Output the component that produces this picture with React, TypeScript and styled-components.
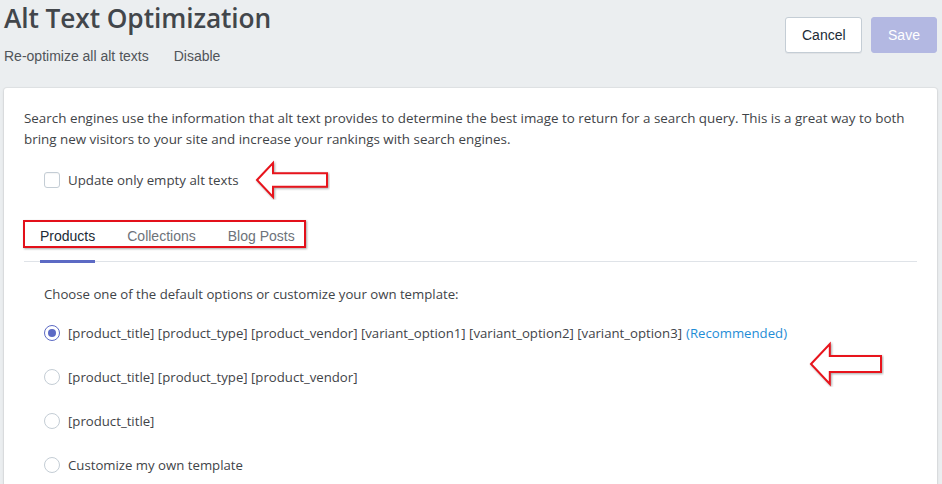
import React from "react";
import styled, { createGlobalStyle } from "styled-components";

const Global = createGlobalStyle`
  html, body { margin: 0; padding: 0; background: #ebeef0; }
  body { font-family: "Open Sans", "Liberation Sans", sans-serif; color: #3f4448; }
  * { box-sizing: border-box; }
`;

const Page = styled.div`
  width: 942px;
  height: 484px;
  overflow: hidden;
  padding: 0 5px 0 4px;
`;

const Header = styled.div`
  display: flex;
  justify-content: space-between;
  align-items: flex-start;
  height: 88px;
`;

const TitleBlock = styled.div`
  display: flex;
  flex-direction: column;
`;

const Title = styled.h1`
  margin: 0;
  font-family: "Open Sans", sans-serif;
  font-weight: 600;
  font-size: 26.3px;
  line-height: 36px;
  color: #42464b;
  letter-spacing: -0.1px;
`;

const SubLinks = styled.div`
  display: flex;
  gap: 25px;
  margin-top: 12px;
  font-family: "Liberation Sans", Arial, sans-serif;
  font-size: 14px;
  color: #505459;
`;

const Actions = styled.div`
  display: flex;
  gap: 9px;
  margin-top: 17px;
`;

const Button = styled.button<{ $primary?: boolean }>`
  height: 36px;
  padding: 0 16px;
  border-radius: 3px;
  font-family: "Liberation Sans", Arial, sans-serif;
  font-size: 14px;
  border: 1px solid ${(p) => (p.$primary ? "#b3b8e2" : "#c4cdd5")};
  background: ${(p) => (p.$primary ? "#b3b8e2" : "#ffffff")};
  color: ${(p) => (p.$primary ? "#ffffff" : "#212b36")};
  box-shadow: ${(p) => (p.$primary ? "none" : "0 1px 0 rgba(22,29,37,0.05)")};
  width: ${(p) => (p.$primary ? "66px" : "77px")};
`;

const Card = styled.div`
  position: relative;
  background: #ffffff;
  border-radius: 3px;
  box-shadow: 0 0 0 1px rgba(63, 63, 68, 0.05), 0 1px 3px 0 rgba(63, 63, 68, 0.15);
  padding: 20px 20px 0 20px;
  height: 420px;
`;

const Intro = styled.p`
  margin: 0;
  font-family: "Open Sans", sans-serif;
  font-size: 13.4px;
  line-height: 21px;
  color: #3f4448;
`;

const CheckRow = styled.label`
  display: flex;
  align-items: center;
  gap: 8px;
  margin: 21px 0 0 20px;
  font-family: "Open Sans", sans-serif;
  font-size: 13.3px;
  color: #3f4448;
  height: 18px;
`;

const Box = styled.span`
  width: 16px;
  height: 16px;
  border: 1px solid #c4cdd5;
  border-radius: 3px;
  background: #fff;
  box-shadow: inset 0 1px 1px rgba(0,0,0,0.04);
`;

const Tabs = styled.div`
  display: flex;
  margin-top: 34px;
  border-bottom: 1px solid #dfe3e8;
  height: 39px;
  position: relative;
`;

const Tab = styled.div<{ $active?: boolean }>`
  padding: 0 16px;
  font-family: "Liberation Sans", Arial, sans-serif;
  font-size: 14px;
  color: ${(p) => (p.$active ? "#212b36" : "#6d737a")};
  height: 39px;
  line-height: 26px;
  position: relative;
  &::after {
    content: "";
    display: ${(p) => (p.$active ? "block" : "none")};
    position: absolute;
    left: 16px;
    right: 16px;
    bottom: -1px;
    height: 3px;
    background: #5c6ac4;
  }
`;

const TabHighlight = styled.div`
  position: absolute;
  left: -1px;
  top: -3px;
  width: 283px;
  height: 28px;
  border: 2px solid #e3101a;
  box-shadow: 1px 1px 2px rgba(0,0,0,0.35);
  pointer-events: none;
`;

const Section = styled.div`
  padding: 23px 0 0 20px;
`;

const Prompt = styled.div`
  font-family: "Open Sans", sans-serif;
  font-size: 13.2px;
  color: #3f4448;
  height: 18px;
  line-height: 18px;
`;

const Options = styled.div`
  display: flex;
  flex-direction: column;
  gap: 26px;
  margin-top: 21px;
`;

const OptionRow = styled.label`
  display: flex;
  align-items: center;
  gap: 8px;
  height: 18px;
  font-family: "Open Sans", sans-serif;
  font-size: 13.2px;
  color: #3f4448;
`;

const Radio = styled.span<{ $checked?: boolean }>`
  width: 16px;
  height: 16px;
  border-radius: 50%;
  border: 1px solid ${(p) => (p.$checked ? "#5c6ac4" : "#c4cdd5")};
  background: #fff;
  display: flex;
  align-items: center;
  justify-content: center;
  &::after {
    content: "";
    display: ${(p) => (p.$checked ? "block" : "none")};
    width: 8px;
    height: 8px;
    border-radius: 50%;
    background: #5c6ac4;
  }
`;

const Recommended = styled.span`
  color: #1f8dd6;
  margin-left: 4px;
`;

const ArrowWrap = styled.div<{ $left: number; $top: number }>`
  position: absolute;
  left: ${(p) => p.$left}px;
  top: ${(p) => p.$top}px;
  pointer-events: none;
`;

const Arrow = ({ w, h }: { w: number; h: number }) => {
  const head = h * 0.47;
  const shaftT = h * 0.3;
  const shaftB = h * 0.7;
  return (
    <svg width={w + 6} height={h + 6} viewBox={`-3 -3 ${w + 6} ${h + 6}`}>
      <path
        d={`M0 ${h / 2} L${head} 0 L${head} ${shaftT} L${w} ${shaftT} L${w} ${shaftB} L${head} ${shaftB} L${head} ${h} Z`}
        fill="#fff"
        stroke="#e8141c"
        strokeWidth="2"
        strokeLinejoin="miter"
        style={{ filter: "drop-shadow(1px 1px 1px rgba(0,0,0,0.35))" }}
      />
    </svg>
  );
};

export default function App() {
  return (
    <Page>
      <Global />
      <Header>
        <TitleBlock>
          <Title>Alt Text Optimization</Title>
          <SubLinks>
            <span>Re-optimize all alt texts</span>
            <span>Disable</span>
          </SubLinks>
        </TitleBlock>
        <Actions>
          <Button>Cancel</Button>
          <Button $primary>Save</Button>
        </Actions>
      </Header>
      <Card>
        <Intro>
          Search engines use the information that alt text provides to determine the best image to return for a search query. This is a great way to both bring new visitors to your site and increase your rankings with search engines.
        </Intro>
        <CheckRow>
          <Box />
          Update only empty alt texts
        </CheckRow>
        <Tabs>
          <TabHighlight />
          <Tab $active>Products</Tab>
          <Tab>Collections</Tab>
          <Tab>Blog Posts</Tab>
        </Tabs>
        <Section>
          <Prompt>Choose one of the default options or customize your own template:</Prompt>
          <Options>
            <OptionRow>
              <Radio $checked />
              <span>
                [product_title] [product_type] [product_vendor] [variant_option1] [variant_option2] [variant_option3]
                <Recommended>(Recommended)</Recommended>
              </span>
            </OptionRow>
            <OptionRow>
              <Radio />
              [product_title] [product_type] [product_vendor]
            </OptionRow>
            <OptionRow>
              <Radio />
              [product_title]
            </OptionRow>
            <OptionRow>
              <Radio />
              Customize my own template
            </OptionRow>
          </Options>
        </Section>
        <ArrowWrap $left={250} $top={72}>
          <Arrow w={70} h={34} />
        </ArrowWrap>
        <ArrowWrap $left={804} $top={253}>
          <Arrow w={70} h={40} />
        </ArrowWrap>
      </Card>
    </Page>
  );
}
